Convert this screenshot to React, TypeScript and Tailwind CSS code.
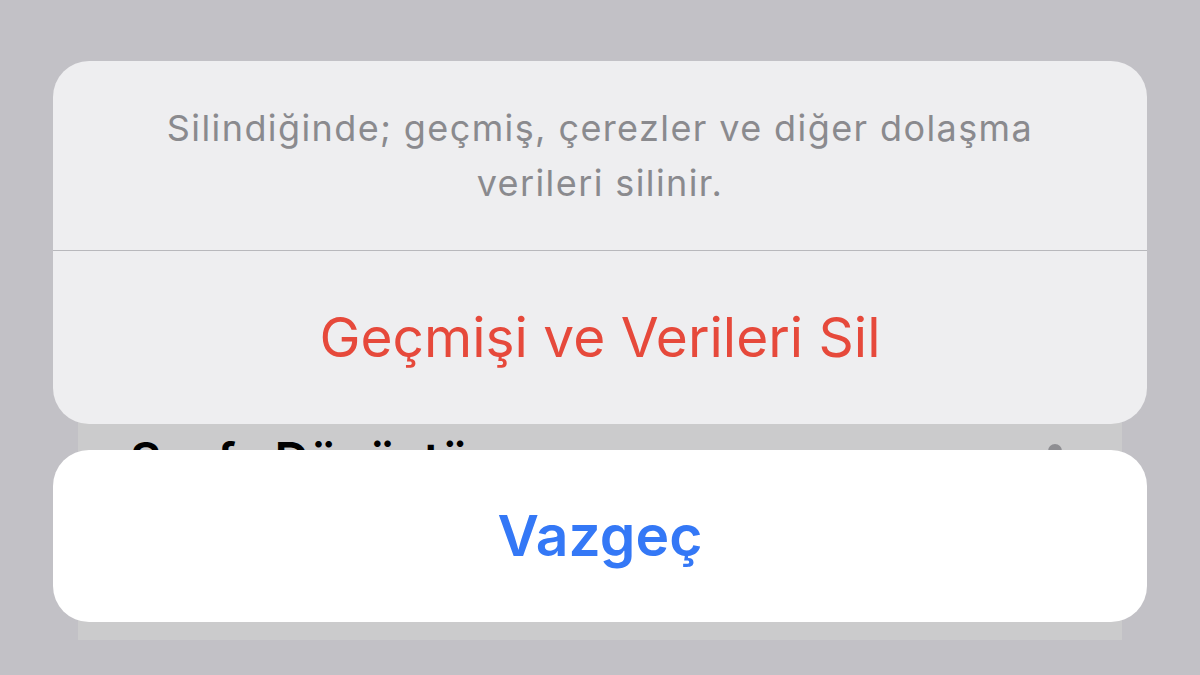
import React from 'react';

const font = { fontFamily: 'Inter, "Liberation Sans", sans-serif' };

// Sheet row behind the dimmed action sheet
const BackgroundRow: React.FC = () => (
    <div className="mx-[78px] mt-[400px] h-[240px] bg-[#cbcbcc] flex justify-between pl-[52px] pr-[60px] pt-[36px]">
        <span className="text-[48px] leading-none font-semibold text-black">Sayfa Dönüştür</span>
        <span className="mt-[8px] w-[14px] h-[14px] rounded-full bg-[#8e8e92]" />
    </div>
);

interface SheetButtonProps {
    label: string;
    className: string;
}

const SheetButton: React.FC<SheetButtonProps> = ({ label, className }) => (
    <button className={`w-full flex items-center justify-center ${className}`}>
        {label}
    </button>
);

export default function App() {
    return (
        <div className="relative w-[1200px] h-[675px] overflow-hidden bg-[#c2c1c6]" style={font}>
            <BackgroundRow />

            {/* Action sheet */}
            <div className="absolute inset-0 px-[53px] pt-[61px] flex flex-col gap-[26px]">
                <div className="rounded-[36px] bg-[#eeeef0] overflow-hidden flex flex-col">
                    <div className="h-[189px] flex items-center justify-center px-[60px]">
                        <p className="text-center text-[36px] tracking-[1.4px] leading-[55px] text-[#8a8a8e]">
                            Silindiğinde; geçmiş, çerezler ve diğer dolaşma<br />verileri silinir.
                        </p>
                    </div>
                    <div className="h-px bg-[#b8b8bc]" />
                    <SheetButton
                        label="Geçmişi ve Verileri Sil"
                        className="h-[173px] text-[55px] text-[#e6493b]"
                    />
                </div>

                <div className="rounded-[36px] bg-white">
                    <SheetButton
                        label="Vazgeç"
                        className="h-[172px] text-[57px] font-semibold text-[#3478f6]"
                    />
                </div>
            </div>
        </div>
    );
}
